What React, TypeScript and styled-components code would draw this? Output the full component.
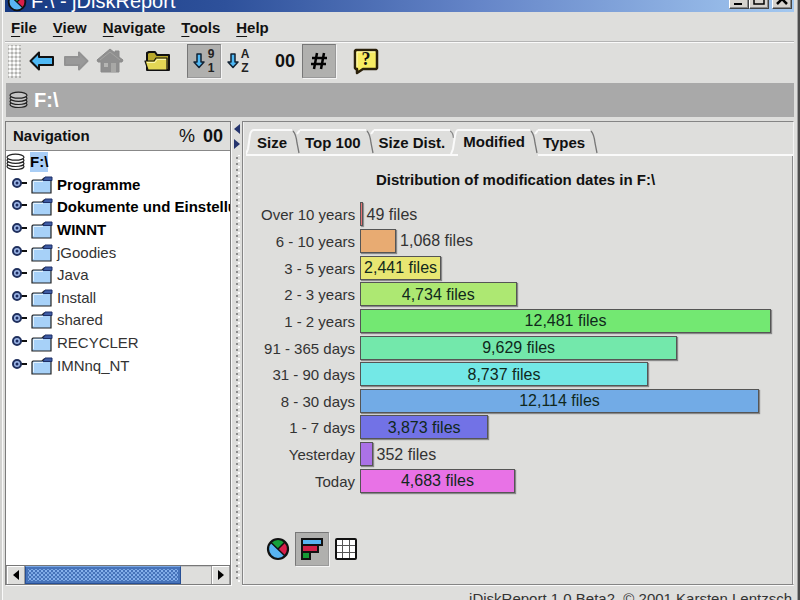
import React, { useState } from "react";
import styled, { createGlobalStyle, css } from "styled-components";

const GlobalStyle = createGlobalStyle`
  *, *::before, *::after { box-sizing: border-box; }
  html, body { margin: 0; padding: 0; height: 100%; overflow: hidden; }
  body { font-family: "Liberation Sans", Arial, sans-serif; font-size: 15px; line-height: 18px; color: #111; }
  button { font: inherit; color: inherit; padding: 0; border: 0; background: none; }
  svg { display: block; flex: none; }
`;

const face = "#dededc";

const Window = styled.div`
  height: 100vh;
  display: flex;
  flex-direction: column;
  padding: 0 4px 0 5px;
  background: ${face};
  border-right: 2px solid #4c4c4c;
  box-shadow: inset 2px 0 #d2d2d0, inset 3px 0 #fafafa, inset -1px 0 #a0a0a0;
  overflow: hidden;
`;

const TitleBar = styled.header`
  height: 12px;
  flex: none;
  display: flex;
  align-items: flex-end;
  justify-content: space-between;
  padding: 0 2px;
  background: linear-gradient(90deg, #173a82 0%, #2e519b 28%, #6585c8 60%, #a3c8f0 100%);
  overflow: hidden;
`;

const TitleGroup = styled.div`
  display: flex;
  align-items: flex-end;
  gap: 4px;
`;

const TitleText = styled.h1`
  margin: 0;
  font-size: 20px;
  line-height: 22px;
  font-weight: 400;
  color: #fff;
`;

const WindowButtons = styled.div`
  display: flex;
  padding-bottom: 3px;
`;

const WindowButton = styled.button<{ $apart?: boolean }>`
  width: 20px;
  height: 19px;
  margin-left: ${(p) => (p.$apart ? 3 : 0)}px;
  background: #d6d3ce;
  border: 1px solid;
  border-color: #fff #444 #444 #fff;
  box-shadow: inset -1px -1px #8a8a8a;
`;

const MenuBar = styled.nav`
  height: 31px;
  flex: none;
  display: flex;
  align-items: center;
  gap: 16px;
  padding: 2px 6px 0;
  border-bottom: 1px solid #fafafa;
  box-shadow: inset 0 -1px #b4b4b4;
`;

const MenuButton = styled.button`
  font-weight: 700;
  &::first-letter {
    text-decoration: underline;
    text-decoration-thickness: 1px;
    text-underline-offset: 3px;
  }
`;

const Toolbar = styled.div`
  height: 40px;
  flex: none;
  display: flex;
  align-items: center;
  padding: 0 3px 4px;
`;

const Grip = styled.span`
  width: 13px;
  height: 33px;
  margin-right: 4px;
  background-image: radial-gradient(circle, #fff 1px, transparent 1px), radial-gradient(circle, #b2b2b0 1px, transparent 1px);
  background-size: 4px 4px;
  background-position: 0 0, 2px 2px;
`;

const ToolButton = styled.button<{ $pressed?: boolean; $gap?: number }>`
  width: 34px;
  height: 34px;
  flex: none;
  display: grid;
  place-items: center;
  margin-left: ${(p) => p.$gap ?? 0}px;
  font-size: 18px;
  font-weight: 700;
  border: 1px solid transparent;
  ${(p) =>
    p.$pressed &&
    css`
      background: #b0b0ae;
      border-color: #777 #999 #999 #777;
      box-shadow: 1px 1px #f4f4f4;
    `}
`;

const PathBand = styled.div`
  height: 34px;
  flex: none;
  display: flex;
  align-items: center;
  gap: 5px;
  margin: 0 0 4px 1px;
  padding: 0 3px;
  background: #a9a9a9;
  color: #fff;
  font-size: 20px;
  font-weight: 700;
`;

const Split = styled.main`
  flex: 1;
  min-height: 0;
  display: grid;
  grid-template-columns: 226px 11px minmax(0, 1fr);
`;

const NavPanel = styled.section`
  display: flex;
  flex-direction: column;
  min-height: 0;
  background: #fff;
  border: 1px solid #7c7c7c;
  box-shadow: 1px 1px #fafafa;
`;

const NavHeader = styled.div`
  height: 29px;
  flex: none;
  display: flex;
  align-items: center;
  gap: 8px;
  padding: 0 7px;
  background: ${face};
  border-bottom: 1px solid #888;
  font-weight: 700;
`;

const NavTitle = styled.h2`
  flex: 1;
  margin: 0;
  font-size: 15px;
`;

const NavUnit = styled.button`
  font-size: 18px;
  font-weight: 700;
`;

const NavPercent = styled(NavUnit)`
  font-weight: 400;
`;

const Tree = styled.ul`
  height: 226px;
  display: flex;
  flex-direction: column;
  margin: 0;
  padding: 0;
  list-style: none;
  overflow: hidden;
`;

const TreeRow = styled.li`
  flex: 1;
  display: flex;
  align-items: center;
  white-space: nowrap;
`;

const Expander = styled.button`
  width: 25px;
  flex: none;
  padding: 0 0 4px 5px;
`;

const TreeLabel = styled.button<{ $bold?: boolean; $selected?: boolean }>`
  height: 20px;
  margin-left: 4px;
  padding: 1px 0;
  font-weight: ${(p) => (p.$bold ? 700 : 400)};
  color: ${(p) => (p.$bold ? "#000" : "#333")};
  background: ${(p) => (p.$selected ? "#a9cef6" : "transparent")};
`;

const ScrollBar = styled.div`
  height: 19px;
  flex: none;
  display: flex;
  margin-top: auto;
  background: ${face};
  border-top: 1px solid #777;
`;

const ScrollArrow = styled.button`
  width: 19px;
  display: grid;
  place-items: center;
  border: 1px solid #999;
  border-width: 0 1px;
  box-shadow: inset 1px 1px #fff;
`;

const ScrollTrack = styled.div`
  flex: 1;
  box-shadow: inset 1px 1px #c4c4c4;
`;

const ScrollThumb = styled.div`
  width: 84%;
  height: 18px;
  border: 1px solid #274f95;
  border-top-color: #79a7e6;
  padding: 2px;
  background: #4673ba;
  &::before {
    content: "";
    display: block;
    height: 12px;
    background-image: radial-gradient(circle, #86b1ec 1px, transparent 1px), radial-gradient(circle, #7ba6e2 1px, transparent 1px);
    background-size: 4px 4px;
    background-position: 0 0, 2px 2px;
  }
`;

const Divider = styled.div`
  display: flex;
  flex-direction: column;
  align-items: center;
  gap: 5px;
  padding: 3px 0 3px;
`;

const DividerDots = styled.span`
  flex: 1;
  width: 6px;
  margin-top: 1px;
  background-image: radial-gradient(circle, #8c8c8c 1px, transparent 1px), radial-gradient(circle, #fff 1px, transparent 1px);
  background-size: 6px 6px;
  background-position: 0 0, 2px 3px;
`;

const ReportPanel = styled.section`
  display: flex;
  flex-direction: column;
  min-height: 0;
  border: 1px solid #858585;
  border-right-color: #f4f4f4;
  box-shadow: inset 1px 0 #f2f2f2, 0 1px #fafafa;
`;

const Tabs = styled.div`
  display: flex;
  flex: none;
  height: 34px;
  padding: 7px 0 0 3px;
`;

const Tab = styled.button<{ $active: boolean }>`
  display: flex;
  font-weight: 700;
  border-bottom: 2px solid ${(p) => (p.$active ? "transparent" : "#fafafa")};
  white-space: nowrap;
`;

const TabLabel = styled.span<{ $active: boolean; $first: boolean }>`
  height: 25px;
  padding: ${(p) => (p.$active ? 2 : 3)}px 5px 0 ${(p) => (p.$first ? 3 : 5)}px;
  border-top: 2px solid #fafafa;
`;

const TabFiller = styled.span`
  flex: 1;
  border-bottom: 2px solid #fafafa;
`;

const Report = styled.div`
  flex: 1;
  min-height: 0;
  display: flex;
  flex-direction: column;
  justify-content: space-between;
  padding: 15px 22px 18px 18px;
  border-right: 1px solid #8c8c8c;
`;

const ChartTitle = styled.h2`
  margin: 0 0 12px;
  font-size: 15px;
  text-align: center;
`;

const Chart = styled.div`
  height: 293px;
  display: flex;
  flex-direction: column;
`;

const ChartRow = styled.div`
  flex: 1;
  display: grid;
  grid-template-columns: 94px minmax(0, 1fr);
  column-gap: 5px;
  align-items: center;
`;

const ChartLabel = styled.span`
  padding-top: 2px;
  text-align: right;
  white-space: nowrap;
  color: #333;
`;

const Track = styled.div`
  display: flex;
  align-items: center;
  gap: 4px;
  font-size: 16px;
  white-space: nowrap;
  color: #333;
`;

const Bar = styled.div<{ $color: string }>`
  height: 24px;
  flex: none;
  min-width: 2px;
  display: grid;
  place-items: center;
  background: ${(p) => p.$color};
  border: 1px solid #555;
  box-shadow: 1px 1px 1px #888;
  color: #10281c;
`;

const BarValue = styled.span`
  padding-top: 1px;
`;

const ViewSwitch = styled.div`
  display: flex;
  align-items: center;
`;

const Footer = styled.footer`
  height: 15px;
  flex: none;
  padding: 5px 2px 0;
  text-align: right;
  white-space: nowrap;
  color: #333;
  overflow: hidden;
`;

const ROWS = [
  { label: "Over 10 years", files: 49, color: "#e87272" },
  { label: "6 - 10 years", files: 1068, color: "#e8ab72" },
  { label: "3 - 5 years", files: 2441, color: "#e8e672" },
  { label: "2 - 3 years", files: 4734, color: "#ade872" },
  { label: "1 - 2 years", files: 12481, color: "#73e872" },
  { label: "91 - 365 days", files: 9629, color: "#73e8ab" },
  { label: "31 - 90 days", files: 8737, color: "#73e8e6" },
  { label: "8 - 30 days", files: 12114, color: "#72abe6" },
  { label: "1 - 7 days", files: 3873, color: "#7272e6" },
  { label: "Yesterday", files: 352, color: "#ab72e6" },
  { label: "Today", files: 4683, color: "#e872e6" },
];
const MAX = Math.max(...ROWS.map((r) => r.files));

const FOLDERS = [
  { name: "Programme", bold: true },
  { name: "Dokumente und Einstellungen", bold: true },
  { name: "WINNT", bold: true },
  { name: "jGoodies" },
  { name: "Java" },
  { name: "Install" },
  { name: "shared" },
  { name: "RECYCLER" },
  { name: "IMNnq_NT" },
];

const TABS = ["Size", "Top 100", "Size Dist.", "Modified", "Types"];

const PieIcon = ({ size = 24 }: { size?: number }) => (
  <svg width={size} height={size} viewBox="0 0 24 24">
    <circle cx="12" cy="12" r="10" fill="#58b4f2" />
    <path d="M12 12 4.500 5A10 10 0 0 1 19 5Z" fill="#16a03a" />
    <path d="M12 12 19 5A10 10 0 0 1 19 19Z" fill="#d81f4a" />
    <path d="M4.500 5 19 19M12 12 19 5" stroke="#111" strokeWidth="1.500" />
    <circle cx="12" cy="12" r="10" fill="none" stroke="#111" strokeWidth="2.200" />
  </svg>
);

const DiskIcon = ({ fill = "#fff" }: { fill?: string }) => (
  <svg width="20" height="18" viewBox="0 0 20 18" fill={fill} stroke="#222" strokeWidth="1.200">
    <ellipse cx="9.500" cy="13.500" rx="8.500" ry="3" />
    <ellipse cx="9.500" cy="10.500" rx="8.500" ry="3" />
    <ellipse cx="9.500" cy="7.300" rx="8.500" ry="3" />
    <ellipse cx="9.500" cy="4.200" rx="8.500" ry="3" />
  </svg>
);

const ArrowIcon = ({ forward }: { forward?: boolean }) => (
  <svg width="26" height="22" viewBox="0 0 26 22">
    <path
      d={forward ? "M24.500 11 16 2.500V7H2v8h14v4.500Z" : "M1.500 11 10 2.500V7h14v8H10v4.500Z"}
      fill={forward ? "#999" : "#4fb9f5"}
      stroke={forward ? "#929292" : "#111"}
      strokeWidth="2"
      strokeLinejoin="round"
    />
  </svg>
);

const HomeIcon = () => (
  <svg width="28" height="26" viewBox="0 0 28 26">
    <path d="M14 1 19 5V3h4v6l4 3-1 2h-3v10H5V14H2l-1-2Z" fill="#8f8f8f" stroke="#8a8a8a" strokeLinejoin="round" />
    <path d="M15 15h5v9h-5z" fill="#a8a8a6" />
    <path d="M4 12 14 4l10 8" fill="none" stroke="#a4a4a2" />
    <path d="M8 15h4v4H8z" fill="#b5b5b3" />
  </svg>
);

const OpenFolderIcon = () => (
  <svg width="28" height="22" viewBox="0 0 28 22" stroke="#111" strokeWidth="2" strokeLinejoin="round">
    <path d="M4 20V3l2-1h6l2 3h12v15Z" fill="#b9a92c" />
    <path d="M5 20 2 11h9l2-3h11v12Z" fill="#e3d755" strokeWidth="1.200" />
    <path d="M4 12.500h8l2-3h9" fill="none" stroke="#fbf7b0" strokeWidth="1" />
  </svg>
);

const SortIcon = ({ top, bottom }: { top: string; bottom: string }) => (
  <svg width="26" height="30" viewBox="0 0 26 30">
    <path d="M6 8h4v8h3L8 21.500 3 16h3Z" fill="#4fb9f5" stroke="#123" strokeWidth="1.500" strokeLinejoin="round" />
    <g fontFamily="Liberation Sans, Arial, sans-serif" fontSize="12" fontWeight="700" fill="#222" textAnchor="middle">
      <text x="20" y="12">{top}</text>
      <text x="20" y="26">{bottom}</text>
    </g>
  </svg>
);

const HelpIcon = () => (
  <svg width="28" height="28" viewBox="0 0 28 28">
    <path d="M4 3h20l1 1v17l-1 1H11l-6 4v-4H4l-1-1V4Z" fill="#f8ec62" stroke="#2a200a" strokeWidth="2.500" strokeLinejoin="round" />
    <path d="M5 20V5h18" fill="none" stroke="#fffbc4" strokeWidth="1" />
    <text x="14" y="18" fontFamily="Liberation Serif, serif" fontSize="18" fontWeight="700" textAnchor="middle" fill="#111">?</text>
  </svg>
);

const FolderIcon = () => (
  <svg width="22" height="18" viewBox="0 0 22 18">
    <path d="M1 17V5l1-1h9l2-2h7v15Z" fill="#a7d1f8" stroke="#222" strokeWidth="1.200" />
    <path d="M2.500 15V5.500H12" stroke="#e4f3ff" fill="none" />
    <path d="M12 4.500 14 1h7v3.500Z" fill="#3e5ca4" stroke="#1d2f66" />
  </svg>
);

const HandleIcon = () => (
  <svg width="18" height="12" viewBox="0 0 18 12">
    <path d="M9 6h7" stroke="#111" strokeWidth="2" />
    <circle cx="6" cy="6" r="4" fill="#9fb9ea" stroke="#20305e" strokeWidth="2" />
    <circle cx="6" cy="6" r="1.500" fill="#1c2c60" />
  </svg>
);

const Triangle = ({ right, color = "#000" }: { right?: boolean; color?: string }) => (
  <svg width="6" height="10" viewBox="0 0 6 10">
    <path d={right ? "M0 0v10L6 5Z" : "M6 0v10L0 5Z"} fill={color} />
  </svg>
);

const BarsIcon = () => (
  <svg width="24" height="24" viewBox="0 0 24 24" stroke="#111" strokeWidth="2">
    <path d="M2 2h20v6H2z" fill="#58b4f2" />
    <path d="M2 8h16v7H2z" fill="#d02048" />
    <path d="M2 15h8v7H2z" fill="#159a35" />
  </svg>
);

const GridIcon = () => (
  <svg width="24" height="24" viewBox="0 0 24 24">
    <rect x="2" y="2" width="20" height="20" rx="1" fill="#fff" stroke="#111" strokeWidth="2" />
    <path d="M8.500 3v18M15.500 3v18M3 8.500h18M3 15.500h18" stroke="#555" />
  </svg>
);

const TabStart = () => (
  <svg width="8" height="25" viewBox="0 0 8 25">
    <path d="M0 25 2 20 4 6Q5 1 8 1" fill="none" stroke="#fafafa" strokeWidth="2" />
  </svg>
);

const TabEnd = ({ beforeActive, last }: { beforeActive: boolean; last: boolean }) => (
  <svg width="8" height="25" viewBox="0 0 8 25">
    {beforeActive ? (
      <>
        <path d="M0 2Q3 3 3.500 9" fill="none" stroke="#888" strokeWidth="1.300" />
        <path d="M1 25 3 20 5 7Q6 1 8 1" fill="none" stroke="#fafafa" strokeWidth="2" />
      </>
    ) : (
      <>
        {!last && <path d="M5 5 8 1" stroke="#fafafa" strokeWidth="2" />}
        <path d="M1 2Q4 5 5 14L7 24" fill="none" stroke="#777" strokeWidth="1.300" />
      </>
    )}
  </svg>
);

export default function App() {
  const [active, setActive] = useState(3);
  return (
    <>
      <GlobalStyle />
      <Window>
        <TitleBar>
          <TitleGroup>
            <PieIcon size={20} />
            <TitleText>F:\ - jDiskReport</TitleText>
          </TitleGroup>
          <WindowButtons>
            <WindowButton aria-label="Minimize">
              <svg width="18" height="17"><path d="M4 13h8" stroke="#000" strokeWidth="2" /></svg>
            </WindowButton>
            <WindowButton aria-label="Maximize">
              <svg width="18" height="17"><path d="M4 3h10v10H4z" fill="none" stroke="#000" strokeWidth="1.500" /></svg>
            </WindowButton>
            <WindowButton aria-label="Close" $apart>
              <svg width="18" height="17"><path d="M4 3 14 13M14 3 4 13" stroke="#000" strokeWidth="2.500" /></svg>
            </WindowButton>
          </WindowButtons>
        </TitleBar>

        <MenuBar>
          {["File", "View", "Navigate", "Tools", "Help"].map((m) => (
            <MenuButton key={m}>{m}</MenuButton>
          ))}
        </MenuBar>

        <Toolbar>
          <Grip />
          <ToolButton aria-label="Back"><ArrowIcon /></ToolButton>
          <ToolButton aria-label="Forward" disabled><ArrowIcon forward /></ToolButton>
          <ToolButton aria-label="Home" disabled><HomeIcon /></ToolButton>
          <ToolButton aria-label="Open folder" $gap={13}><OpenFolderIcon /></ToolButton>
          <ToolButton aria-label="Sort by size" aria-pressed $pressed $gap={13}><SortIcon top="9" bottom="1" /></ToolButton>
          <ToolButton aria-label="Sort by name"><SortIcon top="A" bottom="Z" /></ToolButton>
          <ToolButton $gap={13}>00</ToolButton>
          <ToolButton aria-label="Number of files" aria-pressed $pressed>
            <svg width="20" height="20" viewBox="0 0 20 20" stroke="#000" strokeWidth="2.500">
              <path d="M8 2 5 18M15 2 12 18M3 7h15M2 13h15" />
            </svg>
          </ToolButton>
          <ToolButton aria-label="Help" $gap={13}><HelpIcon /></ToolButton>
        </Toolbar>

        <PathBand>
          <DiskIcon fill="#c4c4c4" />
          <span>F:\</span>
        </PathBand>

        <Split>
          <NavPanel>
            <NavHeader>
              <NavTitle>Navigation</NavTitle>
              <NavPercent>%</NavPercent>
              <NavUnit>00</NavUnit>
            </NavHeader>
            <Tree>
              <TreeRow>
                <DiskIcon />
                <TreeLabel $bold $selected>F:\</TreeLabel>
              </TreeRow>
              {FOLDERS.map((f) => (
                <TreeRow key={f.name}>
                  <Expander aria-label={`Expand ${f.name}`}><HandleIcon /></Expander>
                  <FolderIcon />
                  <TreeLabel $bold={f.bold}>{f.name}</TreeLabel>
                </TreeRow>
              ))}
            </Tree>
            <ScrollBar>
              <ScrollArrow aria-label="Scroll left"><Triangle /></ScrollArrow>
              <ScrollTrack><ScrollThumb /></ScrollTrack>
              <ScrollArrow aria-label="Scroll right"><Triangle right /></ScrollArrow>
            </ScrollBar>
          </NavPanel>

          <Divider>
            <Triangle color="#26356e" />
            <Triangle right color="#26356e" />
            <DividerDots />
          </Divider>

          <ReportPanel>
            <Tabs role="tablist">
              {TABS.map((t, i) => (
                <Tab key={t} role="tab" aria-selected={i === active} $active={i === active} onClick={() => setActive(i)}>
                  {i === 0 && <TabStart />}
                  <TabLabel $active={i === active} $first={i === 0}>{t}</TabLabel>
                  <TabEnd beforeActive={i + 1 === active} last={i === TABS.length - 1} />
                </Tab>
              ))}
              <TabFiller />
            </Tabs>
            <Report>
              <div>
                <ChartTitle>Distribution of modification dates in F:\</ChartTitle>
                <Chart>
                  {ROWS.map((r) => {
                    const value = <BarValue>{r.files.toLocaleString("en-US")} files</BarValue>;
                    const inside = r.files / MAX > 0.15;
                    return (
                      <ChartRow key={r.label}>
                        <ChartLabel>{r.label}</ChartLabel>
                        <Track>
                          <Bar $color={r.color} style={{ width: `calc(${(r.files / MAX) * 100}% + 1px)` }}>
                            {inside && value}
                          </Bar>
                          {!inside && value}
                        </Track>
                      </ChartRow>
                    );
                  })}
                </Chart>
              </div>
              <ViewSwitch>
                <ToolButton aria-label="Pie chart"><PieIcon /></ToolButton>
                <ToolButton aria-label="Bar chart" aria-pressed $pressed><BarsIcon /></ToolButton>
                <ToolButton aria-label="Table"><GridIcon /></ToolButton>
              </ViewSwitch>
            </Report>
          </ReportPanel>
        </Split>

        <Footer>jDiskReport 1.0 Beta2, © 2001 Karsten Lentzsch</Footer>
      </Window>
    </>
  );
}
